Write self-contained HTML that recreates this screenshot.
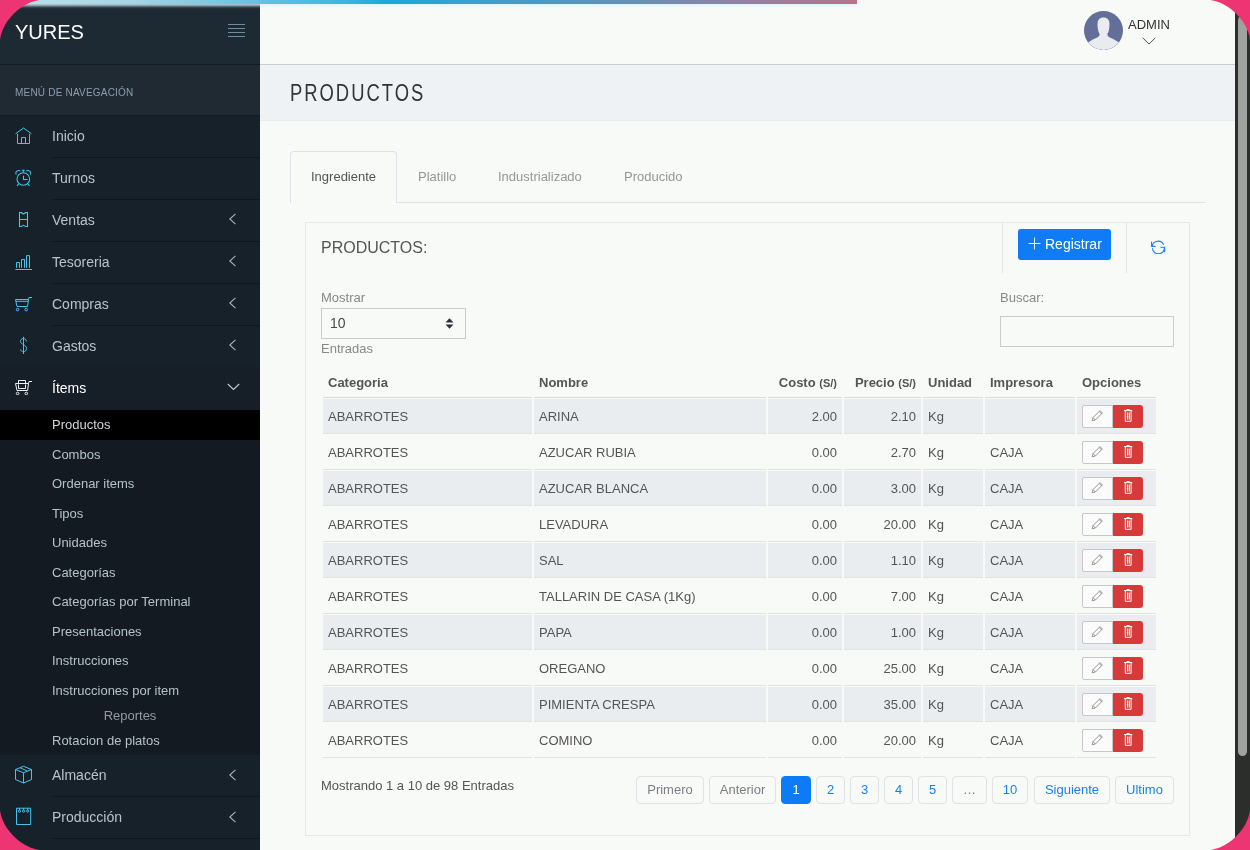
<!DOCTYPE html>
<html><head><meta charset="utf-8">
<style>
*{box-sizing:border-box;margin:0;padding:0}
html,body{width:1250px;height:850px;overflow:hidden;background:#ee3573;font-family:"Liberation Sans",sans-serif}
#frame{will-change:transform;position:absolute;left:0;top:0;width:1250px;height:850px;overflow:hidden;background:#f8faf7}
.abs{position:absolute}
#pace{position:absolute;left:0;top:0;width:857px;height:4px;z-index:50;box-shadow:0 2px 3px rgba(215,245,255,0.9);
background:linear-gradient(90deg,#bfe0e8 0%,#a6d6e4 15%,#7cc8e2 25%,#3db6e0 40%,#1da8dc 45%,#3a9fd0 55%,#6a8fb3 75%,#9880a0 88%,#b6748a 100%)}
#sidebar{position:absolute;left:0;top:0;width:260px;height:850px;background:#17212a}
#sbhead{position:absolute;left:0;top:0;width:260px;height:65px;background:#1e2a33;border-bottom:1px solid #141c23}
#logo{position:absolute;left:15px;top:21px;font-size:20px;color:#fff;line-height:22px}
#burger{position:absolute;left:228px;top:24px;width:17px;height:13px}
#burger i{display:block;height:1px;background:#6f8da2;margin-bottom:3px}
#navhead{position:absolute;left:0;top:65px;width:260px;height:51px;background:#1f2a33;border-bottom:1px solid #131a20}
#navhead span{position:absolute;left:15px;top:22px;font-size:10px;color:#8d9fae;line-height:12px;letter-spacing:0.2px}
.mi{position:absolute;left:0;width:260px;height:42px}
.mi .t{position:absolute;left:52px;top:12px;font-size:14px;line-height:16px;color:#b8c4cc}
.mi .sep{position:absolute;left:52px;right:0;bottom:0;height:1px;background:#10171d}
.mi svg{position:absolute;left:15px;top:12px}
.mi .chev{position:absolute;left:227px;top:14px}
.sub{position:absolute;left:52px;font-size:13px;line-height:15px;color:#b5c2ca}
#main{position:absolute;left:260px;top:0;width:975px;height:850px}
#topbar{position:absolute;left:0;top:0;width:975px;height:65px;background:#f8faf7;border-bottom:1px solid #c9cdd1}
#titlebar{position:absolute;left:0;top:65px;width:975px;height:56px;background:#eff2f5;border-bottom:1px solid #e9ecee}
#titlebar h1{position:absolute;left:30px;top:15px;font-size:23px;font-weight:normal;color:#333;line-height:26px;letter-spacing:2.5px;transform:scaleX(0.8);transform-origin:0 0;white-space:nowrap}
#scroll{position:absolute;left:1235px;top:0;width:15px;height:850px;background:#2c2e2b}
#thumb{position:absolute;left:3px;top:16px;width:9px;height:740px;background:#a0a29f;border-radius:5px}
.tab{top:169px;font-size:13px;line-height:15px;color:#95979a}
.lbl{font-size:13px;line-height:15px;color:#888}
.th{top:375px;font-size:13px;line-height:15px;font-weight:bold;color:#555}
.th small{font-size:11px}
.td{font-size:13px;line-height:15px;color:#555;white-space:nowrap}
.ebtn{width:31px;height:23px;border:1px solid #c9c6c9;border-radius:2px 0 0 2px;background:#fafbfa}
.dbtn{width:30px;height:23px;background:#d63b3a;border-radius:0 3px 3px 0}
.pg{top:776px;height:28px;border:1px solid #dfe2e6;border-radius:4px;font-size:13px;line-height:26px;text-align:center;color:#1a7ff0}
.pgg{color:#7a7f84}
.pga{background:#0d7bf6;border-color:#0d7bf6;color:#fff}
</style></head><body>
<div id="frame">
<div id="sidebar">
  <div id="sbhead"><div id="logo">YURES</div><div id="burger"><i></i><i></i><i></i><i></i></div></div>
  <div id="navhead"><span>MENÚ DE NAVEGACIÓN</span></div>
  <div class="mi" style="top:116px"><svg width="18" height="18" viewBox="0 0 18 18" style="left:15px;top:11px" fill="none" stroke="#45c4ee" stroke-width="1"><path d="M0.5 6.8L8.5 1l8 5.8M2.5 6.8V16.5H14.5V6.8M6.5 16.5V10.5H10.5V16.5"/></svg><span class="t">Inicio</span><i class="sep"></i></div>
  <div class="mi" style="top:158px"><svg width="17" height="18" viewBox="0 0 17 18" style="left:15px;top:11px" fill="none" stroke="#45c4ee" stroke-width="1.05"><circle cx="8.3" cy="10" r="6.3"/><path d="M6.8 1.2H9.8M8.3 1.2V3.6M1.3 5.6A2.7 2.7 0 0 1 5.4 2.2M15.3 5.6A2.7 2.7 0 0 0 11.2 2.2M8.5 6.8V10.5H12.5M3.8 14.8L2 16.8M12.8 14.8L14.6 16.8"/></svg><span class="t">Turnos</span><i class="sep"></i></div>
  <div class="mi" style="top:200px"><svg width="11" height="17" viewBox="0 0 11 17" style="left:18px;top:11px" fill="none" stroke="#45c4ee" stroke-width="1.1"><path d="M1.5 1.6H3.6Q5.5 4.2 7.4 1.6H9.5V15.5H7.4Q5.5 12.9 3.6 15.5H1.5Z M1.5 8.5H9.5"/></svg><span class="t">Ventas</span><svg class="chev" width="9" height="12" viewBox="0 0 9 12" style="left:228px;top:13px" fill="none" stroke="#a9b5bd" stroke-width="1.1"><path d="M7.5 0.8L1.8 6l5.7 5.2"/></svg><i class="sep"></i></div>
  <div class="mi" style="top:242px"><svg width="18" height="16" viewBox="0 0 18 16" style="left:15px;top:13px" fill="none" stroke="#45c4ee" stroke-width="1"><path d="M0.3 14.5H17M1.5 12.8V7.5H4.5V12.8M6.5 12.8V4.5H9.5V12.8M11.5 12.8V0.6H14.5V12.8"/></svg><span class="t">Tesoreria</span><svg class="chev" width="9" height="12" viewBox="0 0 9 12" style="left:228px;top:13px" fill="none" stroke="#a9b5bd" stroke-width="1.1"><path d="M7.5 0.8L1.8 6l5.7 5.2"/></svg><i class="sep"></i></div>
  <div class="mi" style="top:284px"><svg width="18" height="16" viewBox="0 0 18 16" style="left:15px;top:12px" fill="none" stroke="#45c4ee" stroke-width="1"><path d="M13.5 3.5L14 1.5H17M0.5 3.5H13.5L12.5 10.5H2Z M1 5.3H13.2"/><circle cx="2.6" cy="13.6" r="1.3"/><circle cx="11.2" cy="13.6" r="1.3"/></svg><span class="t">Compras</span><svg class="chev" width="9" height="12" viewBox="0 0 9 12" style="left:228px;top:13px" fill="none" stroke="#a9b5bd" stroke-width="1.1"><path d="M7.5 0.8L1.8 6l5.7 5.2"/></svg><i class="sep"></i></div>
  <div class="mi" style="top:326px"><svg width="9" height="19" viewBox="0 0 9 19" style="left:19px;top:10px" fill="none" stroke="#45c4ee" stroke-width="1"><path d="M7.3 5.5C7.3 3.5 6 2.5 4.5 2.5S1.5 3.5 1.5 5.5C1.5 8.5 7.5 8.5 7.5 12.5C7.5 14.5 6 15.8 4.5 15.8S1.5 14.5 1.5 13.5M4.5 0.8V18"/></svg><span class="t">Gastos</span><svg class="chev" width="9" height="12" viewBox="0 0 9 12" style="left:228px;top:13px" fill="none" stroke="#a9b5bd" stroke-width="1.1"><path d="M7.5 0.8L1.8 6l5.7 5.2"/></svg></div>
  <div class="mi" style="top:367px;height:43px;background:#161f28"><svg width="18" height="16" viewBox="0 0 18 16" style="left:15px;top:12px" fill="none" stroke="#eef0f1" stroke-width="1"><path d="M3.5 4.5V1.5H10.5V4.5M0.5 4.5H13.5L12.6 11.5H2Z M3.5 5.5V9.5H10.5V5.5M13.5 4.5L14 2.5H17"/><circle cx="2.6" cy="14.5" r="1.3"/><circle cx="11.3" cy="14.5" r="1.3"/></svg><span class="t" style="color:#fff;top:13px">Ítems</span><svg class="chev" width="13" height="8" viewBox="0 0 13 8" style="left:227px;top:16px" fill="none" stroke="#c5cdd2" stroke-width="1.1"><path d="M0.8 1l5.7 5.5L12.2 1"/></svg></div>
  <div class="abs" style="left:0;top:410px;width:260px;height:345px;background:#131a22"></div>
  <div class="abs" style="left:0;top:410px;width:260px;height:30px;background:#000"></div>
  <div class="sub" style="top:417px;color:#cfd5d9">Productos</div>
  <div class="sub" style="top:447px">Combos</div>
  <div class="sub" style="top:476px">Ordenar items</div>
  <div class="sub" style="top:506px">Tipos</div>
  <div class="sub" style="top:535px">Unidades</div>
  <div class="sub" style="top:565px">Categorías</div>
  <div class="sub" style="top:594px">Categorías por Terminal</div>
  <div class="sub" style="top:624px">Presentaciones</div>
  <div class="sub" style="top:653px">Instrucciones</div>
  <div class="sub" style="top:683px">Instrucciones por item</div>
  <div class="sub" style="top:708px;left:0;width:260px;text-align:center;color:#969a9e">Reportes</div>
  <div class="sub" style="top:733px">Rotacion de platos</div>
  <div class="mi" style="top:755px"><svg width="18" height="19" viewBox="0 0 18 19" style="left:15px;top:10px" fill="none" stroke="#45c4ee" stroke-width="1"><path d="M8.5 1.3L16.5 4.5V14.5L8.5 18L0.5 14.5V4.5Z M0.5 4.5L8.5 7.8L16.5 4.5M8.5 7.8V18M5 2.7L12 5.9"/></svg><span class="t">Almacén</span><svg class="chev" width="9" height="12" viewBox="0 0 9 12" style="left:228px;top:14px" fill="none" stroke="#a9b5bd" stroke-width="1.1"><path d="M7.5 0.8L1.8 6l5.7 5.2"/></svg><i class="sep"></i></div>
  <div class="mi" style="top:797px"><svg width="17" height="19" viewBox="0 0 17 19" style="left:15px;top:10px" fill="none" stroke="#45c4ee" stroke-width="1"><path d="M1.5 1.2H15.7V17.5H1.5Z M4.5 1.2V3.1M8.6 1.2V3.1M12.7 1.2V3.1"/><circle cx="4.5" cy="4.2" r="1.1"/><circle cx="8.6" cy="4.2" r="1.1"/><circle cx="12.7" cy="4.2" r="1.1"/></svg><span class="t">Producción</span><svg class="chev" width="9" height="12" viewBox="0 0 9 12" style="left:228px;top:14px" fill="none" stroke="#a9b5bd" stroke-width="1.1"><path d="M7.5 0.8L1.8 6l5.7 5.2"/></svg><i class="sep"></i></div>
</div>
<div id="main">
  <div id="topbar"></div>
  <div id="titlebar"><h1>PRODUCTOS</h1></div>
  <div class="abs" style="left:824px;top:11px;width:39px;height:39px;border-radius:50%;background:#636f98;overflow:hidden">
    <svg width="39" height="39" viewBox="0 0 39 39"><path d="M19.5 6.5c-4 0-6 2.5-6 6.5 0 2.5 0.3 4.5 0.6 6 0.4 2 1.2 3.5 1.6 4.2 0 1-0.6 2-2 3C10 28 6.5 29.5 4 31.5 8 36 13.5 39 19.5 39S31 36 35 31.5C32.5 29.5 29 28 25.3 26.2c-1.4-1-2-2-2-3 .4-.7 1.2-2.2 1.6-4.2.3-1.5.6-3.5.6-6 0-4-2-6.5-6-6.5z" fill="#e8ebef"/></svg>
  </div>
  <div class="abs" style="left:868px;top:17px;font-size:13px;line-height:15px;color:#333">ADMIN</div>
  <svg class="abs" style="left:882px;top:37px" width="14" height="8" viewBox="0 0 14 8" fill="none" stroke="#555" stroke-width="1"><path d="M0.7 0.8L7 7l6.3-6.2"/></svg>

  <div class="abs" style="left:30px;top:202px;width:915px;height:1px;background:#dee2e6"></div>
  <div class="abs" style="left:30px;top:151px;width:107px;height:52px;border:1px solid #dee2e6;border-bottom:0;border-radius:4px 4px 0 0;background:#f8faf7"></div>
  <div class="abs tab" style="left:51px;color:#555">Ingrediente</div>
  <div class="abs tab" style="left:158px">Platillo</div>
  <div class="abs tab" style="left:238px">Industrializado</div>
  <div class="abs tab" style="left:364px">Producido</div>

  <div class="abs" style="left:45px;top:222px;width:885px;height:614px;border:1px solid #e6e8e8"></div>
  <div class="abs" style="left:61px;top:239px;font-size:16px;line-height:18px;color:#555">PRODUCTOS:</div>
  <div class="abs" style="left:742px;top:222px;width:1px;height:51px;background:#e3e5e5"></div>
  <div class="abs" style="left:866px;top:222px;width:1px;height:51px;background:#e3e5e5"></div>
  <div class="abs" style="left:758px;top:229px;width:93px;height:31px;background:#0f7bf5;border-radius:3px;color:#fff;font-size:14px;line-height:16px">
    <svg class="abs" style="left:10px;top:8px" width="13" height="13" viewBox="0 0 13 13" stroke="#eaf3ff" stroke-width="1"><path d="M6.5 0.5v12M0.5 6.5h12"/></svg>
    <span class="abs" style="left:27px;top:7px">Registrar</span>
  </div>
  <svg class="abs" style="left:890px;top:239px" width="16" height="15" viewBox="0 0 16 15" fill="none" stroke="#1a7ef5" stroke-width="1.1"><path d="M13.6 5.8A6 6 0 0 0 2.2 7M1.6 2.5V7.4H5.6M2.4 9.3A6 6 0 0 0 14.4 8.4M10.4 8.3H14.7V13.2"/></svg>

  <div class="abs lbl" style="left:61px;top:290px">Mostrar</div>
  <div class="abs" style="left:61px;top:308px;width:145px;height:31px;border:1px solid #c8cacb;background:#f8faf7">
    <span class="abs" style="left:8px;top:6px;font-size:14px;line-height:16px;color:#4a4a4a">10</span>
    <svg class="abs" style="left:123px;top:9px" width="9" height="11" viewBox="0 0 9 11" fill="#2b3139"><path d="M4.5 0.3L8.5 4.5H0.5zM4.5 10.7L0.5 6.5H8.5z"/></svg>
  </div>
  <div class="abs lbl" style="left:61px;top:341px">Entradas</div>
  <div class="abs lbl" style="left:740px;top:290px">Buscar:</div>
  <div class="abs" style="left:740px;top:316px;width:174px;height:31px;border:1px solid #c8cacb;background:#f8faf7"></div>
<!--TABLE-->
<div class="abs" style="left:63px;top:397px;width:209px;height:1px;background:#dcd9da"></div>
<div class="abs th" style="left:68px">Categoria</div>
<div class="abs" style="left:274px;top:397px;width:232px;height:1px;background:#dcd9da"></div>
<div class="abs th" style="left:279px">Nombre</div>
<div class="abs" style="left:508px;top:397px;width:74px;height:1px;background:#dcd9da"></div>
<div class="abs th" style="left:508px;width:69px;text-align:right">Costo <small>(S/)</small></div>
<div class="abs" style="left:584px;top:397px;width:77px;height:1px;background:#dcd9da"></div>
<div class="abs th" style="left:584px;width:72px;text-align:right">Precio <small>(S/)</small></div>
<div class="abs" style="left:663px;top:397px;width:60px;height:1px;background:#dcd9da"></div>
<div class="abs th" style="left:668px">Unidad</div>
<div class="abs" style="left:725px;top:397px;width:90px;height:1px;background:#dcd9da"></div>
<div class="abs th" style="left:730px">Impresora</div>
<div class="abs" style="left:817px;top:397px;width:79px;height:1px;background:#dcd9da"></div>
<div class="abs th" style="left:822px">Opciones</div>
<div class="abs" style="left:63px;top:399px;width:209px;height:34px;background:#e9edf0"></div>
<div class="abs" style="left:63px;top:433px;width:209px;height:1px;background:#e4e1e3"></div>
<div class="abs td" style="left:68px;top:409px">ABARROTES</div>
<div class="abs" style="left:274px;top:399px;width:232px;height:34px;background:#e9edf0"></div>
<div class="abs" style="left:274px;top:433px;width:232px;height:1px;background:#e4e1e3"></div>
<div class="abs td" style="left:279px;top:409px">ARINA</div>
<div class="abs" style="left:508px;top:399px;width:74px;height:34px;background:#e9edf0"></div>
<div class="abs" style="left:508px;top:433px;width:74px;height:1px;background:#e4e1e3"></div>
<div class="abs td" style="left:508px;top:409px;width:69px;text-align:right">2.00</div>
<div class="abs" style="left:584px;top:399px;width:77px;height:34px;background:#e9edf0"></div>
<div class="abs" style="left:584px;top:433px;width:77px;height:1px;background:#e4e1e3"></div>
<div class="abs td" style="left:584px;top:409px;width:72px;text-align:right">2.10</div>
<div class="abs" style="left:663px;top:399px;width:60px;height:34px;background:#e9edf0"></div>
<div class="abs" style="left:663px;top:433px;width:60px;height:1px;background:#e4e1e3"></div>
<div class="abs td" style="left:668px;top:409px">Kg</div>
<div class="abs" style="left:725px;top:399px;width:90px;height:34px;background:#e9edf0"></div>
<div class="abs" style="left:725px;top:433px;width:90px;height:1px;background:#e4e1e3"></div>
<div class="abs" style="left:817px;top:399px;width:79px;height:34px;background:#e9edf0"></div>
<div class="abs" style="left:817px;top:433px;width:79px;height:1px;background:#e4e1e3"></div>
<div class="abs ebtn" style="left:822px;top:405px"><svg class="abs" style="left:8px;top:3px" width="13" height="13" viewBox="0 0 13 13" fill="none" stroke="#8a8a8a" stroke-width="0.9"><path d="M1.2 11.8l0.8-3.2 7-7 2.4 2.4-7 7zM2 8.6l2.4 2.4M8.2 2.4l2.4 2.4"/></svg></div>
<div class="abs dbtn" style="left:853px;top:405px"><svg class="abs" style="left:10px;top:4px" width="10" height="13" viewBox="0 0 10 13" fill="none" stroke="#fff" stroke-width="1"><path d="M1 1.6H9.3M3.9 1.6V0.6H6.4V1.6M2.3 1.6V12.3H8.1V1.6"/><path d="M4.5 3.5V10.5M6.3 3.5V10.5" stroke-width="1.1"/></svg></div>
<div class="abs" style="left:63px;top:469px;width:209px;height:1px;background:#e4e1e3"></div>
<div class="abs td" style="left:68px;top:445px">ABARROTES</div>
<div class="abs" style="left:274px;top:469px;width:232px;height:1px;background:#e4e1e3"></div>
<div class="abs td" style="left:279px;top:445px">AZUCAR RUBIA</div>
<div class="abs" style="left:508px;top:469px;width:74px;height:1px;background:#e4e1e3"></div>
<div class="abs td" style="left:508px;top:445px;width:69px;text-align:right">0.00</div>
<div class="abs" style="left:584px;top:469px;width:77px;height:1px;background:#e4e1e3"></div>
<div class="abs td" style="left:584px;top:445px;width:72px;text-align:right">2.70</div>
<div class="abs" style="left:663px;top:469px;width:60px;height:1px;background:#e4e1e3"></div>
<div class="abs td" style="left:668px;top:445px">Kg</div>
<div class="abs" style="left:725px;top:469px;width:90px;height:1px;background:#e4e1e3"></div>
<div class="abs td" style="left:730px;top:445px">CAJA</div>
<div class="abs" style="left:817px;top:469px;width:79px;height:1px;background:#e4e1e3"></div>
<div class="abs ebtn" style="left:822px;top:441px"><svg class="abs" style="left:8px;top:3px" width="13" height="13" viewBox="0 0 13 13" fill="none" stroke="#8a8a8a" stroke-width="0.9"><path d="M1.2 11.8l0.8-3.2 7-7 2.4 2.4-7 7zM2 8.6l2.4 2.4M8.2 2.4l2.4 2.4"/></svg></div>
<div class="abs dbtn" style="left:853px;top:441px"><svg class="abs" style="left:10px;top:4px" width="10" height="13" viewBox="0 0 10 13" fill="none" stroke="#fff" stroke-width="1"><path d="M1 1.6H9.3M3.9 1.6V0.6H6.4V1.6M2.3 1.6V12.3H8.1V1.6"/><path d="M4.5 3.5V10.5M6.3 3.5V10.5" stroke-width="1.1"/></svg></div>
<div class="abs" style="left:63px;top:471px;width:209px;height:34px;background:#e9edf0"></div>
<div class="abs" style="left:63px;top:505px;width:209px;height:1px;background:#e4e1e3"></div>
<div class="abs td" style="left:68px;top:481px">ABARROTES</div>
<div class="abs" style="left:274px;top:471px;width:232px;height:34px;background:#e9edf0"></div>
<div class="abs" style="left:274px;top:505px;width:232px;height:1px;background:#e4e1e3"></div>
<div class="abs td" style="left:279px;top:481px">AZUCAR BLANCA</div>
<div class="abs" style="left:508px;top:471px;width:74px;height:34px;background:#e9edf0"></div>
<div class="abs" style="left:508px;top:505px;width:74px;height:1px;background:#e4e1e3"></div>
<div class="abs td" style="left:508px;top:481px;width:69px;text-align:right">0.00</div>
<div class="abs" style="left:584px;top:471px;width:77px;height:34px;background:#e9edf0"></div>
<div class="abs" style="left:584px;top:505px;width:77px;height:1px;background:#e4e1e3"></div>
<div class="abs td" style="left:584px;top:481px;width:72px;text-align:right">3.00</div>
<div class="abs" style="left:663px;top:471px;width:60px;height:34px;background:#e9edf0"></div>
<div class="abs" style="left:663px;top:505px;width:60px;height:1px;background:#e4e1e3"></div>
<div class="abs td" style="left:668px;top:481px">Kg</div>
<div class="abs" style="left:725px;top:471px;width:90px;height:34px;background:#e9edf0"></div>
<div class="abs" style="left:725px;top:505px;width:90px;height:1px;background:#e4e1e3"></div>
<div class="abs td" style="left:730px;top:481px">CAJA</div>
<div class="abs" style="left:817px;top:471px;width:79px;height:34px;background:#e9edf0"></div>
<div class="abs" style="left:817px;top:505px;width:79px;height:1px;background:#e4e1e3"></div>
<div class="abs ebtn" style="left:822px;top:477px"><svg class="abs" style="left:8px;top:3px" width="13" height="13" viewBox="0 0 13 13" fill="none" stroke="#8a8a8a" stroke-width="0.9"><path d="M1.2 11.8l0.8-3.2 7-7 2.4 2.4-7 7zM2 8.6l2.4 2.4M8.2 2.4l2.4 2.4"/></svg></div>
<div class="abs dbtn" style="left:853px;top:477px"><svg class="abs" style="left:10px;top:4px" width="10" height="13" viewBox="0 0 10 13" fill="none" stroke="#fff" stroke-width="1"><path d="M1 1.6H9.3M3.9 1.6V0.6H6.4V1.6M2.3 1.6V12.3H8.1V1.6"/><path d="M4.5 3.5V10.5M6.3 3.5V10.5" stroke-width="1.1"/></svg></div>
<div class="abs" style="left:63px;top:541px;width:209px;height:1px;background:#e4e1e3"></div>
<div class="abs td" style="left:68px;top:517px">ABARROTES</div>
<div class="abs" style="left:274px;top:541px;width:232px;height:1px;background:#e4e1e3"></div>
<div class="abs td" style="left:279px;top:517px">LEVADURA</div>
<div class="abs" style="left:508px;top:541px;width:74px;height:1px;background:#e4e1e3"></div>
<div class="abs td" style="left:508px;top:517px;width:69px;text-align:right">0.00</div>
<div class="abs" style="left:584px;top:541px;width:77px;height:1px;background:#e4e1e3"></div>
<div class="abs td" style="left:584px;top:517px;width:72px;text-align:right">20.00</div>
<div class="abs" style="left:663px;top:541px;width:60px;height:1px;background:#e4e1e3"></div>
<div class="abs td" style="left:668px;top:517px">Kg</div>
<div class="abs" style="left:725px;top:541px;width:90px;height:1px;background:#e4e1e3"></div>
<div class="abs td" style="left:730px;top:517px">CAJA</div>
<div class="abs" style="left:817px;top:541px;width:79px;height:1px;background:#e4e1e3"></div>
<div class="abs ebtn" style="left:822px;top:513px"><svg class="abs" style="left:8px;top:3px" width="13" height="13" viewBox="0 0 13 13" fill="none" stroke="#8a8a8a" stroke-width="0.9"><path d="M1.2 11.8l0.8-3.2 7-7 2.4 2.4-7 7zM2 8.6l2.4 2.4M8.2 2.4l2.4 2.4"/></svg></div>
<div class="abs dbtn" style="left:853px;top:513px"><svg class="abs" style="left:10px;top:4px" width="10" height="13" viewBox="0 0 10 13" fill="none" stroke="#fff" stroke-width="1"><path d="M1 1.6H9.3M3.9 1.6V0.6H6.4V1.6M2.3 1.6V12.3H8.1V1.6"/><path d="M4.5 3.5V10.5M6.3 3.5V10.5" stroke-width="1.1"/></svg></div>
<div class="abs" style="left:63px;top:543px;width:209px;height:34px;background:#e9edf0"></div>
<div class="abs" style="left:63px;top:577px;width:209px;height:1px;background:#e4e1e3"></div>
<div class="abs td" style="left:68px;top:553px">ABARROTES</div>
<div class="abs" style="left:274px;top:543px;width:232px;height:34px;background:#e9edf0"></div>
<div class="abs" style="left:274px;top:577px;width:232px;height:1px;background:#e4e1e3"></div>
<div class="abs td" style="left:279px;top:553px">SAL</div>
<div class="abs" style="left:508px;top:543px;width:74px;height:34px;background:#e9edf0"></div>
<div class="abs" style="left:508px;top:577px;width:74px;height:1px;background:#e4e1e3"></div>
<div class="abs td" style="left:508px;top:553px;width:69px;text-align:right">0.00</div>
<div class="abs" style="left:584px;top:543px;width:77px;height:34px;background:#e9edf0"></div>
<div class="abs" style="left:584px;top:577px;width:77px;height:1px;background:#e4e1e3"></div>
<div class="abs td" style="left:584px;top:553px;width:72px;text-align:right">1.10</div>
<div class="abs" style="left:663px;top:543px;width:60px;height:34px;background:#e9edf0"></div>
<div class="abs" style="left:663px;top:577px;width:60px;height:1px;background:#e4e1e3"></div>
<div class="abs td" style="left:668px;top:553px">Kg</div>
<div class="abs" style="left:725px;top:543px;width:90px;height:34px;background:#e9edf0"></div>
<div class="abs" style="left:725px;top:577px;width:90px;height:1px;background:#e4e1e3"></div>
<div class="abs td" style="left:730px;top:553px">CAJA</div>
<div class="abs" style="left:817px;top:543px;width:79px;height:34px;background:#e9edf0"></div>
<div class="abs" style="left:817px;top:577px;width:79px;height:1px;background:#e4e1e3"></div>
<div class="abs ebtn" style="left:822px;top:549px"><svg class="abs" style="left:8px;top:3px" width="13" height="13" viewBox="0 0 13 13" fill="none" stroke="#8a8a8a" stroke-width="0.9"><path d="M1.2 11.8l0.8-3.2 7-7 2.4 2.4-7 7zM2 8.6l2.4 2.4M8.2 2.4l2.4 2.4"/></svg></div>
<div class="abs dbtn" style="left:853px;top:549px"><svg class="abs" style="left:10px;top:4px" width="10" height="13" viewBox="0 0 10 13" fill="none" stroke="#fff" stroke-width="1"><path d="M1 1.6H9.3M3.9 1.6V0.6H6.4V1.6M2.3 1.6V12.3H8.1V1.6"/><path d="M4.5 3.5V10.5M6.3 3.5V10.5" stroke-width="1.1"/></svg></div>
<div class="abs" style="left:63px;top:613px;width:209px;height:1px;background:#e4e1e3"></div>
<div class="abs td" style="left:68px;top:589px">ABARROTES</div>
<div class="abs" style="left:274px;top:613px;width:232px;height:1px;background:#e4e1e3"></div>
<div class="abs td" style="left:279px;top:589px">TALLARIN DE CASA (1Kg)</div>
<div class="abs" style="left:508px;top:613px;width:74px;height:1px;background:#e4e1e3"></div>
<div class="abs td" style="left:508px;top:589px;width:69px;text-align:right">0.00</div>
<div class="abs" style="left:584px;top:613px;width:77px;height:1px;background:#e4e1e3"></div>
<div class="abs td" style="left:584px;top:589px;width:72px;text-align:right">7.00</div>
<div class="abs" style="left:663px;top:613px;width:60px;height:1px;background:#e4e1e3"></div>
<div class="abs td" style="left:668px;top:589px">Kg</div>
<div class="abs" style="left:725px;top:613px;width:90px;height:1px;background:#e4e1e3"></div>
<div class="abs td" style="left:730px;top:589px">CAJA</div>
<div class="abs" style="left:817px;top:613px;width:79px;height:1px;background:#e4e1e3"></div>
<div class="abs ebtn" style="left:822px;top:585px"><svg class="abs" style="left:8px;top:3px" width="13" height="13" viewBox="0 0 13 13" fill="none" stroke="#8a8a8a" stroke-width="0.9"><path d="M1.2 11.8l0.8-3.2 7-7 2.4 2.4-7 7zM2 8.6l2.4 2.4M8.2 2.4l2.4 2.4"/></svg></div>
<div class="abs dbtn" style="left:853px;top:585px"><svg class="abs" style="left:10px;top:4px" width="10" height="13" viewBox="0 0 10 13" fill="none" stroke="#fff" stroke-width="1"><path d="M1 1.6H9.3M3.9 1.6V0.6H6.4V1.6M2.3 1.6V12.3H8.1V1.6"/><path d="M4.5 3.5V10.5M6.3 3.5V10.5" stroke-width="1.1"/></svg></div>
<div class="abs" style="left:63px;top:615px;width:209px;height:34px;background:#e9edf0"></div>
<div class="abs" style="left:63px;top:649px;width:209px;height:1px;background:#e4e1e3"></div>
<div class="abs td" style="left:68px;top:625px">ABARROTES</div>
<div class="abs" style="left:274px;top:615px;width:232px;height:34px;background:#e9edf0"></div>
<div class="abs" style="left:274px;top:649px;width:232px;height:1px;background:#e4e1e3"></div>
<div class="abs td" style="left:279px;top:625px">PAPA</div>
<div class="abs" style="left:508px;top:615px;width:74px;height:34px;background:#e9edf0"></div>
<div class="abs" style="left:508px;top:649px;width:74px;height:1px;background:#e4e1e3"></div>
<div class="abs td" style="left:508px;top:625px;width:69px;text-align:right">0.00</div>
<div class="abs" style="left:584px;top:615px;width:77px;height:34px;background:#e9edf0"></div>
<div class="abs" style="left:584px;top:649px;width:77px;height:1px;background:#e4e1e3"></div>
<div class="abs td" style="left:584px;top:625px;width:72px;text-align:right">1.00</div>
<div class="abs" style="left:663px;top:615px;width:60px;height:34px;background:#e9edf0"></div>
<div class="abs" style="left:663px;top:649px;width:60px;height:1px;background:#e4e1e3"></div>
<div class="abs td" style="left:668px;top:625px">Kg</div>
<div class="abs" style="left:725px;top:615px;width:90px;height:34px;background:#e9edf0"></div>
<div class="abs" style="left:725px;top:649px;width:90px;height:1px;background:#e4e1e3"></div>
<div class="abs td" style="left:730px;top:625px">CAJA</div>
<div class="abs" style="left:817px;top:615px;width:79px;height:34px;background:#e9edf0"></div>
<div class="abs" style="left:817px;top:649px;width:79px;height:1px;background:#e4e1e3"></div>
<div class="abs ebtn" style="left:822px;top:621px"><svg class="abs" style="left:8px;top:3px" width="13" height="13" viewBox="0 0 13 13" fill="none" stroke="#8a8a8a" stroke-width="0.9"><path d="M1.2 11.8l0.8-3.2 7-7 2.4 2.4-7 7zM2 8.6l2.4 2.4M8.2 2.4l2.4 2.4"/></svg></div>
<div class="abs dbtn" style="left:853px;top:621px"><svg class="abs" style="left:10px;top:4px" width="10" height="13" viewBox="0 0 10 13" fill="none" stroke="#fff" stroke-width="1"><path d="M1 1.6H9.3M3.9 1.6V0.6H6.4V1.6M2.3 1.6V12.3H8.1V1.6"/><path d="M4.5 3.5V10.5M6.3 3.5V10.5" stroke-width="1.1"/></svg></div>
<div class="abs" style="left:63px;top:685px;width:209px;height:1px;background:#e4e1e3"></div>
<div class="abs td" style="left:68px;top:661px">ABARROTES</div>
<div class="abs" style="left:274px;top:685px;width:232px;height:1px;background:#e4e1e3"></div>
<div class="abs td" style="left:279px;top:661px">OREGANO</div>
<div class="abs" style="left:508px;top:685px;width:74px;height:1px;background:#e4e1e3"></div>
<div class="abs td" style="left:508px;top:661px;width:69px;text-align:right">0.00</div>
<div class="abs" style="left:584px;top:685px;width:77px;height:1px;background:#e4e1e3"></div>
<div class="abs td" style="left:584px;top:661px;width:72px;text-align:right">25.00</div>
<div class="abs" style="left:663px;top:685px;width:60px;height:1px;background:#e4e1e3"></div>
<div class="abs td" style="left:668px;top:661px">Kg</div>
<div class="abs" style="left:725px;top:685px;width:90px;height:1px;background:#e4e1e3"></div>
<div class="abs td" style="left:730px;top:661px">CAJA</div>
<div class="abs" style="left:817px;top:685px;width:79px;height:1px;background:#e4e1e3"></div>
<div class="abs ebtn" style="left:822px;top:657px"><svg class="abs" style="left:8px;top:3px" width="13" height="13" viewBox="0 0 13 13" fill="none" stroke="#8a8a8a" stroke-width="0.9"><path d="M1.2 11.8l0.8-3.2 7-7 2.4 2.4-7 7zM2 8.6l2.4 2.4M8.2 2.4l2.4 2.4"/></svg></div>
<div class="abs dbtn" style="left:853px;top:657px"><svg class="abs" style="left:10px;top:4px" width="10" height="13" viewBox="0 0 10 13" fill="none" stroke="#fff" stroke-width="1"><path d="M1 1.6H9.3M3.9 1.6V0.6H6.4V1.6M2.3 1.6V12.3H8.1V1.6"/><path d="M4.5 3.5V10.5M6.3 3.5V10.5" stroke-width="1.1"/></svg></div>
<div class="abs" style="left:63px;top:687px;width:209px;height:34px;background:#e9edf0"></div>
<div class="abs" style="left:63px;top:721px;width:209px;height:1px;background:#e4e1e3"></div>
<div class="abs td" style="left:68px;top:697px">ABARROTES</div>
<div class="abs" style="left:274px;top:687px;width:232px;height:34px;background:#e9edf0"></div>
<div class="abs" style="left:274px;top:721px;width:232px;height:1px;background:#e4e1e3"></div>
<div class="abs td" style="left:279px;top:697px">PIMIENTA CRESPA</div>
<div class="abs" style="left:508px;top:687px;width:74px;height:34px;background:#e9edf0"></div>
<div class="abs" style="left:508px;top:721px;width:74px;height:1px;background:#e4e1e3"></div>
<div class="abs td" style="left:508px;top:697px;width:69px;text-align:right">0.00</div>
<div class="abs" style="left:584px;top:687px;width:77px;height:34px;background:#e9edf0"></div>
<div class="abs" style="left:584px;top:721px;width:77px;height:1px;background:#e4e1e3"></div>
<div class="abs td" style="left:584px;top:697px;width:72px;text-align:right">35.00</div>
<div class="abs" style="left:663px;top:687px;width:60px;height:34px;background:#e9edf0"></div>
<div class="abs" style="left:663px;top:721px;width:60px;height:1px;background:#e4e1e3"></div>
<div class="abs td" style="left:668px;top:697px">Kg</div>
<div class="abs" style="left:725px;top:687px;width:90px;height:34px;background:#e9edf0"></div>
<div class="abs" style="left:725px;top:721px;width:90px;height:1px;background:#e4e1e3"></div>
<div class="abs td" style="left:730px;top:697px">CAJA</div>
<div class="abs" style="left:817px;top:687px;width:79px;height:34px;background:#e9edf0"></div>
<div class="abs" style="left:817px;top:721px;width:79px;height:1px;background:#e4e1e3"></div>
<div class="abs ebtn" style="left:822px;top:693px"><svg class="abs" style="left:8px;top:3px" width="13" height="13" viewBox="0 0 13 13" fill="none" stroke="#8a8a8a" stroke-width="0.9"><path d="M1.2 11.8l0.8-3.2 7-7 2.4 2.4-7 7zM2 8.6l2.4 2.4M8.2 2.4l2.4 2.4"/></svg></div>
<div class="abs dbtn" style="left:853px;top:693px"><svg class="abs" style="left:10px;top:4px" width="10" height="13" viewBox="0 0 10 13" fill="none" stroke="#fff" stroke-width="1"><path d="M1 1.6H9.3M3.9 1.6V0.6H6.4V1.6M2.3 1.6V12.3H8.1V1.6"/><path d="M4.5 3.5V10.5M6.3 3.5V10.5" stroke-width="1.1"/></svg></div>
<div class="abs" style="left:63px;top:757px;width:209px;height:1px;background:#e4e1e3"></div>
<div class="abs td" style="left:68px;top:733px">ABARROTES</div>
<div class="abs" style="left:274px;top:757px;width:232px;height:1px;background:#e4e1e3"></div>
<div class="abs td" style="left:279px;top:733px">COMINO</div>
<div class="abs" style="left:508px;top:757px;width:74px;height:1px;background:#e4e1e3"></div>
<div class="abs td" style="left:508px;top:733px;width:69px;text-align:right">0.00</div>
<div class="abs" style="left:584px;top:757px;width:77px;height:1px;background:#e4e1e3"></div>
<div class="abs td" style="left:584px;top:733px;width:72px;text-align:right">20.00</div>
<div class="abs" style="left:663px;top:757px;width:60px;height:1px;background:#e4e1e3"></div>
<div class="abs td" style="left:668px;top:733px">Kg</div>
<div class="abs" style="left:725px;top:757px;width:90px;height:1px;background:#e4e1e3"></div>
<div class="abs td" style="left:730px;top:733px">CAJA</div>
<div class="abs" style="left:817px;top:757px;width:79px;height:1px;background:#e4e1e3"></div>
<div class="abs ebtn" style="left:822px;top:729px"><svg class="abs" style="left:8px;top:3px" width="13" height="13" viewBox="0 0 13 13" fill="none" stroke="#8a8a8a" stroke-width="0.9"><path d="M1.2 11.8l0.8-3.2 7-7 2.4 2.4-7 7zM2 8.6l2.4 2.4M8.2 2.4l2.4 2.4"/></svg></div>
<div class="abs dbtn" style="left:853px;top:729px"><svg class="abs" style="left:10px;top:4px" width="10" height="13" viewBox="0 0 10 13" fill="none" stroke="#fff" stroke-width="1"><path d="M1 1.6H9.3M3.9 1.6V0.6H6.4V1.6M2.3 1.6V12.3H8.1V1.6"/><path d="M4.5 3.5V10.5M6.3 3.5V10.5" stroke-width="1.1"/></svg></div>
<div class="abs td" style="left:61px;top:778px;color:#555">Mostrando 1 a 10 de 98 Entradas</div>
<div class="abs pg pgg" style="left:376px;width:68px">Primero</div>
<div class="abs pg pgg" style="left:449px;width:67px">Anterior</div>
<div class="abs pg pga" style="left:521px;width:30px">1</div>
<div class="abs pg pgb" style="left:556px;width:29px">2</div>
<div class="abs pg pgb" style="left:590px;width:29px">3</div>
<div class="abs pg pgb" style="left:624px;width:29px">4</div>
<div class="abs pg pgb" style="left:658px;width:29px">5</div>
<div class="abs pg pgg" style="left:692px;width:35px">…</div>
<div class="abs pg pgb" style="left:732px;width:36px">10</div>
<div class="abs pg pgb" style="left:774px;width:76px">Siguiente</div>
<div class="abs pg pgb" style="left:855px;width:59px">Ultimo</div>
<!--/TABLE-->
</div>
<div id="scroll"><div id="thumb"></div></div>
<div id="pace"></div>
</div>
<svg id="corners" width="1250" height="850" viewBox="0 0 1250 850" style="position:absolute;left:0;top:0;z-index:100"><path fill="#ee3573" fill-rule="evenodd" d="M0 0H1250V850H0Z M1209.00 0.00 L1210.66 0.10 L1212.74 0.41 L1214.99 0.93 L1217.36 1.64 L1219.79 2.55 L1222.24 3.65 L1224.70 4.93 L1227.14 6.38 L1229.53 8.00 L1231.87 9.77 L1234.12 11.69 L1236.27 13.73 L1238.31 15.88 L1240.23 18.13 L1242.00 20.47 L1243.62 22.86 L1245.07 25.30 L1246.35 27.76 L1247.45 30.21 L1248.36 32.64 L1249.07 35.01 L1249.59 37.26 L1249.90 39.34 L1250.00 41.00 L1250.00 809.00 L1249.90 810.66 L1249.59 812.74 L1249.07 814.99 L1248.36 817.36 L1247.45 819.79 L1246.35 822.24 L1245.07 824.70 L1243.62 827.14 L1242.00 829.53 L1240.23 831.87 L1238.31 834.12 L1236.27 836.27 L1234.12 838.31 L1231.87 840.23 L1229.53 842.00 L1227.14 843.62 L1224.70 845.07 L1222.24 846.35 L1219.79 847.45 L1217.36 848.36 L1214.99 849.07 L1212.74 849.59 L1210.66 849.90 L1209.00 850.00 L41.00 850.00 L39.34 849.90 L37.26 849.59 L35.01 849.07 L32.64 848.36 L30.21 847.45 L27.76 846.35 L25.30 845.07 L22.86 843.62 L20.47 842.00 L18.13 840.23 L15.88 838.31 L13.73 836.27 L11.69 834.12 L9.77 831.87 L8.00 829.53 L6.38 827.14 L4.93 824.70 L3.65 822.24 L2.55 819.79 L1.64 817.36 L0.93 814.99 L0.41 812.74 L0.10 810.66 L0.00 809.00 L0.00 41.00 L0.10 39.34 L0.41 37.26 L0.93 35.01 L1.64 32.64 L2.55 30.21 L3.65 27.76 L4.93 25.30 L6.38 22.86 L8.00 20.47 L9.77 18.13 L11.69 15.88 L13.73 13.73 L15.88 11.69 L18.13 9.77 L20.47 8.00 L22.86 6.38 L25.30 4.93 L27.76 3.65 L30.21 2.55 L32.64 1.64 L35.01 0.93 L37.26 0.41 L39.34 0.10 L41.00 0.00Z"/></svg>
</body></html>
